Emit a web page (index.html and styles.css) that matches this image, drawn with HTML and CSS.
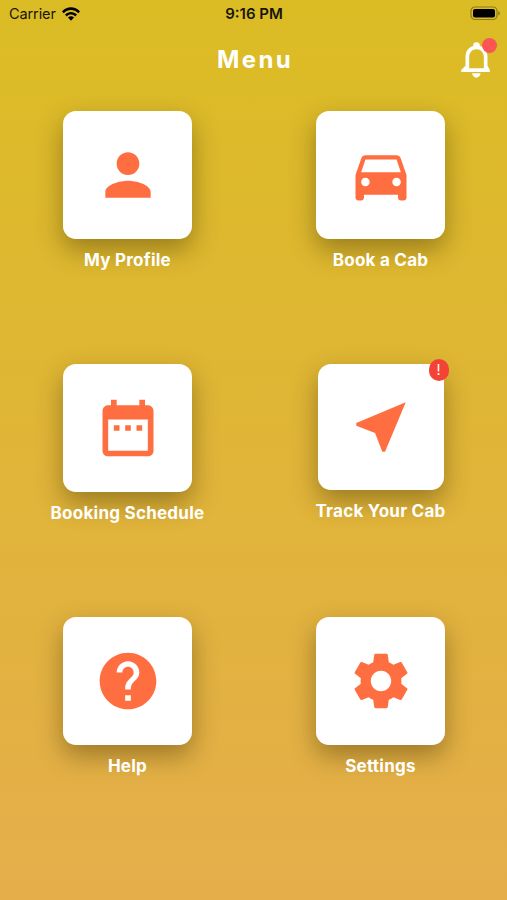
FILE: index.html
```
<!DOCTYPE html>
<html lang="en">
<head>
    <meta charset="UTF-8">
    <meta name="viewport" content="width=device-width, initial-scale=1.0">
    <title>Menu</title>
    <link rel="stylesheet" href="styles.css">
</head>
<body>
    <!-- Status bar -->
    <div class="status-bar">
        <div class="carrier">
            <span>Carrier</span>
            <svg class="wifi" viewBox="0 0 18 14">
                <path d="M0 4.4C5 -1.1 13 -1.1 18 4.4L16.2 6.3C12.2 2 5.800 2 1.8 6.300Z"/>
                <path d="M3 7.500C6.400 4 11.600 4 15 7.500L13.200 9.400C10.800 7 7.200 7 4.800 9.400Z"/>
                <path d="M6 10.600C7.700 8.900 10.300 8.900 12 10.600L9 13.700Z"/>
            </svg>
        </div>
        <div class="time">9:16 PM</div>
        <div class="battery-wrap">
            <svg class="battery" viewBox="0 0 31 15">
                <rect class="battery-case" x="1" y="1" width="26" height="12.500" rx="4"/>
                <rect x="3" y="3" width="22" height="8.500" rx="2"/>
                <path class="battery-tip" d="M28.300 5c2.200 .8 2.200 3.700 0 4.500z"/>
            </svg>
        </div>
    </div>

    <!-- Header -->
    <header class="header">
        <h1>Menu</h1>
        <a href="#" class="bell">
            <svg viewBox="20 26 86 108">
                <path d="M66 27c-6 0-10 4-10 9v2C42 42 33 54 33 70v27L20 110v6h86v-6L99 97V70C99 54 90 42 76 38v-2c0-5-4-9-10-9zM44 105V72c0-14 9-24 22-24s22 10 22 24v33z"/>
                <path d="M53 120h25c0 7-6 13-12.500 13S53 127 53 120z"/>
            </svg>
            <span class="dot"></span>
        </a>
    </header>

    <!-- Menu items -->
    <main class="menu">
        <a href="#" class="item">
            <div class="card">
                <svg viewBox="0 0 24 24"><path d="M12 12c2.210 0 4-1.790 4-4s-1.790-4-4-4-4 1.790-4 4 1.790 4 4 4zm0 2c-2.670 0-8 1.340-8 4v2h16v-2c0-2.660-5.330-4-8-4z"/></svg>
            </div>
            <span class="label">My Profile</span>
        </a>
        <a href="#" class="item">
            <div class="card">
                <svg viewBox="0 0 24 24"><path d="M18.920 6.010C18.720 5.420 18.160 5 17.500 5h-11c-.66 0-1.210.42-1.420 1.010L3 12v8c0 .55.45 1 1 1h1c.55 0 1-.45 1-1v-1h12v1c0 .55.45 1 1 1h1c.55 0 1-.45 1-1v-8l-2.080-5.990zM6.500 16c-.83 0-1.500-.67-1.500-1.500S5.670 13 6.500 13s1.500.67 1.500 1.500S7.330 16 6.500 16zm11 0c-.83 0-1.500-.67-1.500-1.500s.67-1.500 1.500-1.500 1.500.67 1.500 1.500-.67 1.500-1.500 1.500zM5 11l1.500-4.500h11L19 11H5z"/></svg>
            </div>
            <span class="label">Book a Cab</span>
        </a>
        <a href="#" class="item">
            <div class="card">
                <svg viewBox="0 0 24 24"><path d="M9 11H7v2h2v-2zm4 0h-2v2h2v-2zm4 0h-2v2h2v-2zm2-7h-1V2h-2v2H8V2H6v2H5c-1.110 0-1.990.9-1.990 2L3 20c0 1.100.89 2 2 2h14c1.100 0 2-.9 2-2V6c0-1.100-.9-2-2-2zm0 16H5V9h14v11z"/></svg>
            </div>
            <span class="label">Booking Schedule</span>
        </a>
        <a href="#" class="item">
            <div class="card card-small">
                <svg viewBox="0 0 24 24"><path d="M21 3L3 10.530v.98l6.840 2.650L12.480 21h.98L21 3z"/></svg>
                <span class="badge">!</span>
            </div>
            <span class="label">Track Your Cab</span>
        </a>
        <a href="#" class="item">
            <div class="card">
                <svg viewBox="0 0 24 24"><path d="M12 2C6.480 2 2 6.480 2 12s4.480 10 10 10 10-4.480 10-10S17.520 2 12 2zm1 17h-2v-2h2v2zm2.070-7.750l-.9.920C13.450 12.900 13 13.500 13 15h-2v-.5c0-1.100.45-2.100 1.170-2.830l1.240-1.260c.37-.36.59-.86.59-1.410 0-1.100-.9-2-2-2s-2 .9-2 2H8c0-2.210 1.790-4 4-4s4 1.790 4 4c0 .88-.36 1.680-.93 2.250z"/></svg>
            </div>
            <span class="label">Help</span>
        </a>
        <a href="#" class="item">
            <div class="card">
                <svg viewBox="0 0 24 24"><path d="M19.140 12.940c.04-.3.060-.61.060-.94 0-.32-.02-.64-.07-.94l2.030-1.580c.18-.14.23-.41.12-.61l-1.920-3.320c-.12-.22-.37-.29-.59-.22l-2.390.96c-.5-.38-1.030-.7-1.620-.94l-.36-2.540c-.04-.24-.24-.41-.48-.41h-3.840c-.24 0-.43.17-.47.41l-.36 2.540c-.59.24-1.130.57-1.620.94l-2.390-.96c-.22-.08-.47 0-.59.22L2.740 8.870c-.12.21-.08.47.12.61l2.030 1.580c-.05.3-.09.63-.09.94s.02.64.07.94l-2.030 1.580c-.18.14-.23.41-.12.61l1.920 3.320c.12.22.37.29.59.22l2.390-.96c.5.38 1.030.7 1.620.94l.36 2.540c.05.24.24.41.48.41h3.840c.24 0 .44-.17.47-.41l.36-2.540c.59-.24 1.130-.56 1.620-.94l2.390.96c.22.08.47 0 .59-.22l1.920-3.320c.12-.22.070-.47-.12-.61l-2.010-1.580zM12 15.600c-1.980 0-3.600-1.620-3.600-3.600s1.620-3.600 3.600-3.600 3.600 1.620 3.600 3.600-1.620 3.600-3.600 3.600z"/></svg>
            </div>
            <span class="label">Settings</span>
        </a>
    </main>
</body>
</html>
```
FILE: styles.css
```
* {
    box-sizing: border-box;
}

body {
    font-family: Inter, sans-serif;
    background: linear-gradient(#dbbc24, #e5ae4b);
    height: 900px;
    margin: 0;
    overflow: hidden;
}

a {
    color: inherit;
    text-decoration: none;
}

svg {
    display: block;
}

/* Status bar */
.status-bar {
    display: grid;
    grid-template-columns: 1fr auto 1fr;
    align-items: center;
    height: 27px;
    padding: 0 6px 0 9px;
    font-size: 14.5px;
    color: #17150a;
}

.carrier {
    display: flex;
    align-items: center;
    gap: 6px;
    letter-spacing: -0.1px;
}

.wifi {
    width: 18px;
    height: 14px;
}

.time {
    font-size: 15px;
    font-weight: 600;
    margin-right: 2px;
}

.battery-wrap {
    display: flex;
    justify-content: flex-end;
}

.battery {
    width: 31px;
    height: 15px;
    fill: #000;
}

.battery-case {
    fill: none;
    stroke: #8f7b1d;
    stroke-width: 1.2;
}

.battery-tip {
    fill: #8f7b1d;
}

/* Header */
.header {
    display: grid;
    grid-template-columns: 1fr auto 1fr;
    align-items: center;
    height: 66px;
    padding: 0 17px 0 20px;
    color: #fff;
}

.header h1 {
    grid-column: 2;
    margin: -2px 0 0;
    font-size: 24px;
    font-weight: 700;
    letter-spacing: 2.4px;
}

.bell {
    position: relative;
    justify-self: end;
}

.bell svg {
    width: 29px;
    height: 36px;
    fill: #fff;
}

.dot {
    position: absolute;
    top: -4px;
    right: -7px;
    width: 15px;
    height: 15px;
    border-radius: 50%;
    background: #fb5555;
}

/* Menu grid */
.menu {
    display: grid;
    grid-template-columns: 253px 253px;
    grid-auto-rows: 253px;
    padding-top: 18px;
    padding-left: 1px;
}

.item {
    display: flex;
    flex-direction: column;
    align-items: center;
}

.card {
    position: relative;
    display: flex;
    justify-content: center;
    align-items: center;
    width: 129px;
    height: 128px;
    border-radius: 13px;
    background: #fff;
    box-shadow: 0 11px 26px rgba(60, 45, 0, 0.42);
}

.card svg {
    width: 68px;
    height: 68px;
    fill: #ff6e40;
}

.card-small {
    width: 126px;
    height: 126px;
}

.card-small svg {
    width: 66px;
    height: 66px;
}

.badge {
    position: absolute;
    top: -5px;
    right: -5px;
    width: 20px;
    height: 22px;
    border-radius: 10px;
    background: #f44336;
    color: #fff;
    font-size: 14px;
    line-height: 22px;
    text-align: center;
}

/* Above the card shadow */
.label {
    position: relative;
    margin-top: 11px;
    font-size: 17px;
    font-weight: 700;
    line-height: 21px;
    letter-spacing: 0.25px;
    color: #fff;
}
```
